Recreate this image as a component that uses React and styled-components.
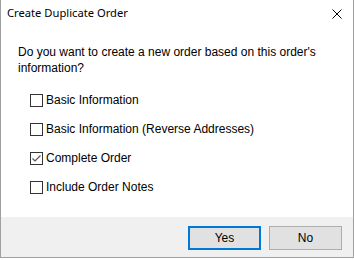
import React, { useState } from "react";
import styled, { createGlobalStyle } from "styled-components";

const Global = createGlobalStyle`
  html, body {
    margin: 0;
    padding: 0;
    background: #ffffff;
  }
`;

const options = [
  { id: "basic", label: "Basic Information" },
  { id: "reverse", label: "Basic Information (Reverse Addresses)" },
  { id: "complete", label: "Complete Order" },
  { id: "notes", label: "Include Order Notes" },
];

const App = () => {
  const [checked, setChecked] = useState({ complete: true });

  const toggle = (id) => {
    setChecked((prev) => ({ ...prev, [id]: !prev[id] }));
  };

  return (
    <>
      <Global />
      <Window>
        <TitleBar>
          <Title>Create Duplicate Order</Title>
          <CloseButton aria-label="Close">
            <svg width="10" height="10" viewBox="0 0 10 10">
              <path d="M0.5 0.5 L9.5 9.5 M9.5 0.5 L0.5 9.5" stroke="#000" strokeWidth="1" fill="none" />
            </svg>
          </CloseButton>
        </TitleBar>
        <Body>
          <Question>Do you want to create a new order based on this order's information?</Question>
          <OptionList>
            {options.map((o) => (
              <Option key={o.id} onClick={() => toggle(o.id)}>
                <Box>
                  {checked[o.id] && (
                    <svg width="11" height="11" viewBox="0 0 11 11">
                      <path d="M1.5 5.5 L4 8 L9.5 2.5" stroke="#555" strokeWidth="1.2" fill="none" />
                    </svg>
                  )}
                </Box>
                <OptionLabel>{o.label}</OptionLabel>
              </Option>
            ))}
          </OptionList>
        </Body>
        <Footer>
          <Button $primary>Yes</Button>
          <Button>No</Button>
        </Footer>
      </Window>
    </>
  );
};

export default App;

const Window = styled.div`
  width: 354px;
  height: 258px;
  box-sizing: border-box;
  border: 1px solid #a0a0a0;
  border-top: none;
  background: #ffffff;
  display: flex;
  flex-direction: column;
  font-family: "Liberation Sans", Arial, sans-serif;
  color: #000;
`;

const TitleBar = styled.div`
  height: 30px;
  display: flex;
  align-items: flex-start;
  justify-content: space-between;
  padding: 0 11px 0 6px;
`;

const Title = styled.span`
  font-family: "Noto Sans", sans-serif;
  font-size: 11.2px;
  line-height: 16px;
  margin-top: 5px;
`;

const CloseButton = styled.div`
  width: 10px;
  height: 10px;
  margin-top: 9px;
  display: flex;
`;

const Body = styled.div`
  flex: 1;
  padding: 14px 17px 0;
`;

const Question = styled.p`
  margin: 0;
  font-size: 12px;
  line-height: 16px;
`;

const OptionList = styled.div`
  margin-top: 10px;
  padding-left: 12px;
  display: flex;
  flex-direction: column;
`;

const Option = styled.div`
  height: 29px;
  display: flex;
  align-items: center;
  cursor: default;
`;

const Box = styled.span`
  width: 13px;
  height: 13px;
  box-sizing: border-box;
  border: 1px solid #333;
  background: #fff;
  display: flex;
  align-items: center;
  justify-content: center;
`;

const OptionLabel = styled.span`
  margin-left: 3px;
  font-size: 12px;
  line-height: 15px;
`;

const Footer = styled.div`
  height: 40px;
  background: #f0f0f0;
  display: flex;
  justify-content: flex-end;
  align-items: flex-start;
  gap: 8px;
  padding: 9px 11px 0 0;
  box-sizing: border-box;
`;

const Button = styled.button`
  width: 73px;
  height: 24px;
  box-sizing: border-box;
  background: #e1e1e1;
  border: ${(p) => (p.$primary ? "2px solid #0078d7" : "1px solid #adadad")};
  font-family: "Liberation Sans", Arial, sans-serif;
  font-size: 12px;
  color: #000;
  padding: 0;
  border-radius: 0;
`;
